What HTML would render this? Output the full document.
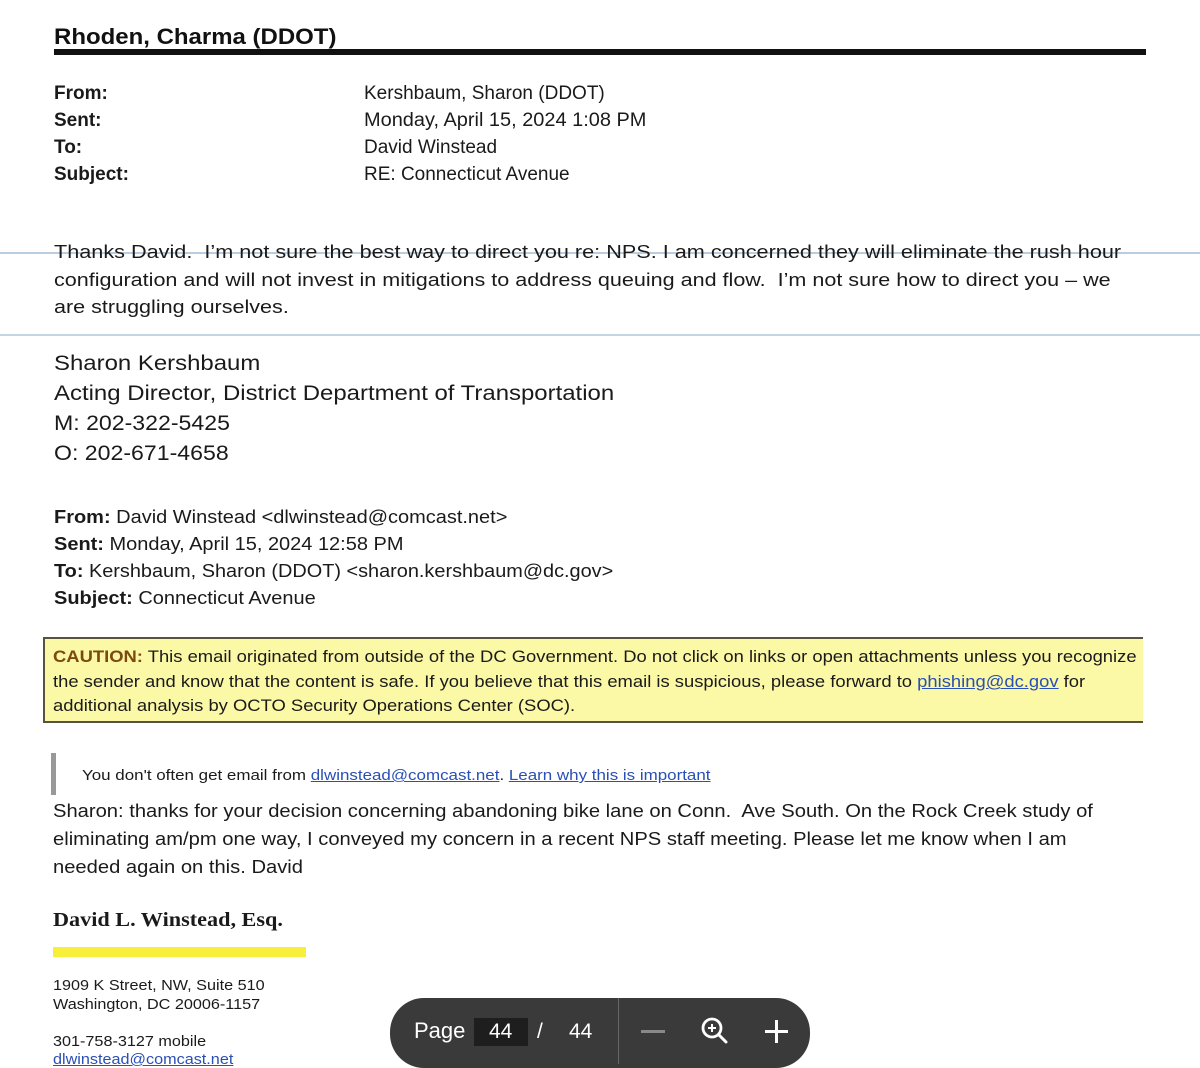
<!DOCTYPE html>
<html><head><meta charset="utf-8"><style>
body{margin:0;width:1200px;height:1064px;background:#fff;position:relative;overflow:hidden;font-family:"Liberation Sans",sans-serif;color:#1a1a1a}
.a{position:absolute;white-space:nowrap;line-height:1;transform-origin:left}
.b{font-weight:bold}
a{color:#2a4fb5;text-decoration:underline}
</style></head><body>
<div class="a b" style="left:54px;top:26px;font-size:22px;color:#111;transform:scaleX(1.09)">Rhoden, Charma (DDOT)</div>
<div class="a" style="left:54px;top:49px;width:1092px;height:6px;background:#111"></div>

<div class="a b" style="left:54px;top:84px;font-size:19px">From:</div>
<div class="a b" style="left:54px;top:111px;font-size:19px">Sent:</div>
<div class="a b" style="left:54px;top:138px;font-size:19px">To:</div>
<div class="a b" style="left:54px;top:165px;font-size:19px">Subject:</div>
<div class="a" style="left:364px;top:84px;font-size:19px">Kershbaum, Sharon (DDOT)</div>
<div class="a" style="left:364px;top:111px;font-size:19px;transform:scaleX(1.05)">Monday, April 15, 2024 1:08 PM</div>
<div class="a" style="left:364px;top:138px;font-size:19px">David Winstead</div>
<div class="a" style="left:364px;top:165px;font-size:19px">RE: Connecticut Avenue</div>

<div class="a" style="left:0;top:252px;width:1200px;height:2px;background:#b9cde0"></div>
<div class="a" style="left:54px;top:243px;font-size:18.5px;transform:scaleX(1.17)">Thanks David.&nbsp; I’m not sure the best way to direct you re: NPS. I am concerned they will eliminate the rush hour</div>
<div class="a" style="left:54px;top:271px;font-size:18.5px;transform:scaleX(1.165)">configuration and will not invest in mitigations to address queuing and flow.&nbsp; I’m not sure how to direct you – we</div>
<div class="a" style="left:54px;top:298px;font-size:18.5px;transform:scaleX(1.165)">are struggling ourselves.</div>
<div class="a" style="left:0;top:334px;width:1200px;height:2px;background:#c4d5e6"></div>

<div class="a" style="left:54px;top:353px;font-size:21px;transform:scaleX(1.14)">Sharon Kershbaum</div>
<div class="a" style="left:54px;top:383px;font-size:21px;transform:scaleX(1.14)">Acting Director, District Department of Transportation</div>
<div class="a" style="left:54px;top:413px;font-size:21px;transform:scaleX(1.1)">M: 202-322-5425</div>
<div class="a" style="left:54px;top:443px;font-size:21px;transform:scaleX(1.1)">O: 202-671-4658</div>

<div class="a" style="left:54px;top:508px;font-size:18.5px;transform:scaleX(1.08)"><b>From:</b> David Winstead &lt;dlwinstead@comcast.net&gt;</div>
<div class="a" style="left:54px;top:535px;font-size:18.5px;transform:scaleX(1.08)"><b>Sent:</b> Monday, April 15, 2024 12:58 PM</div>
<div class="a" style="left:54px;top:562px;font-size:18.5px;transform:scaleX(1.075)"><b>To:</b> Kershbaum, Sharon (DDOT) &lt;sharon.kershbaum@dc.gov&gt;</div>
<div class="a" style="left:54px;top:589px;font-size:18.5px;transform:scaleX(1.08)"><b>Subject:</b> Connecticut Avenue</div>

<div class="a" style="left:43px;top:637px;width:1098px;height:82px;background:#fbf8a6;border:2px solid #5a5240;border-right:none"></div>
<div class="a" style="left:53px;top:649px;font-size:16.5px;transform:scaleX(1.115)"><span class="b" style="color:#7a4a10">CAUTION:</span> This email originated from outside of the DC Government. Do not click on links or open attachments unless you recognize</div>
<div class="a" style="left:53px;top:674px;font-size:16.5px;transform:scaleX(1.115)">the sender and know that the content is safe. If you believe that this email is suspicious, please forward to <a>phishing@dc.gov</a> for</div>
<div class="a" style="left:53px;top:698px;font-size:16.5px;transform:scaleX(1.115)">additional analysis by OCTO Security Operations Center (SOC).</div>

<div class="a" style="left:51px;top:753px;width:5px;height:42px;background:#999"></div>
<div class="a" style="left:82px;top:768px;font-size:15px;transform:scaleX(1.13)">You don't often get email from <a>dlwinstead@comcast.net</a>. <a>Learn why this is important</a></div>

<div class="a" style="left:53px;top:802px;font-size:18.5px;transform:scaleX(1.09)">Sharon: thanks for your decision concerning abandoning bike lane on Conn.&nbsp; Ave South. On the Rock Creek study of</div>
<div class="a" style="left:53px;top:830px;font-size:18.5px;transform:scaleX(1.09)">eliminating am/pm one way, I conveyed my concern in a recent NPS staff meeting. Please let me know when I am</div>
<div class="a" style="left:53px;top:858px;font-size:18.5px;transform:scaleX(1.09)">needed again on this. David</div>

<div class="a b" style="left:53px;top:910px;font-size:20px;font-family:'Liberation Serif',serif;transform:scaleX(1.11)">David L. Winstead, Esq.</div>
<div class="a" style="left:53px;top:947px;width:253px;height:10px;background:#f7ef3a"></div>
<div class="a" style="left:53px;top:978px;font-size:15px;transform:scaleX(1.08)">1909 K Street, NW, Suite 510</div>
<div class="a" style="left:53px;top:997px;font-size:15px;transform:scaleX(1.08)">Washington, DC 20006-1157</div>
<div class="a" style="left:53px;top:1034px;font-size:15px;transform:scaleX(1.08)">301-758-3127 mobile</div>
<div class="a" style="left:53px;top:1052px;font-size:15px;color:#2a4fb5;text-decoration:underline;transform:scaleX(1.08)">dlwinstead@comcast.net</div>

<div class="a" style="left:390px;top:998px;width:420px;height:70px;background:#3a3a3a;border-radius:34px"></div>
<div class="a" style="left:618px;top:998px;width:1px;height:66px;background:#666"></div>
<div class="a" style="left:414px;top:1020px;font-size:22px;color:#fff">Page</div>
<div class="a" style="left:474px;top:1018px;width:54px;height:28px;background:#1e1e1e"></div>
<div class="a" style="left:489px;top:1021px;font-size:21px;color:#fff">44</div>
<div class="a" style="left:537px;top:1021px;font-size:21px;color:#fff">/</div>
<div class="a" style="left:569px;top:1021px;font-size:21px;color:#fff">44</div>
<div class="a" style="left:641px;top:1030px;width:24px;height:3px;background:#888"></div>
<svg class="a" style="left:699px;top:1016px" width="32" height="32" viewBox="0 0 32 32"><circle cx="13" cy="12" r="9" fill="none" stroke="#fff" stroke-width="2.8"/><path d="M19.5 18.5L27 26" stroke="#fff" stroke-width="3" stroke-linecap="round"/><path d="M13 8v8M9 12h8" stroke="#fff" stroke-width="2"/></svg>
<div class="a" style="left:765px;top:1030px;width:23px;height:3px;background:#fff"></div>
<div class="a" style="left:775px;top:1020px;width:3px;height:23px;background:#fff"></div>
</body></html>
